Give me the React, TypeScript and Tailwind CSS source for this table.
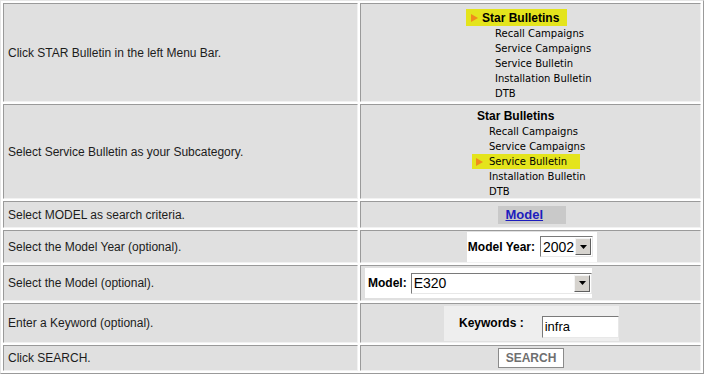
import type { ReactNode } from "react";

const SUB_ITEMS = [
  "Recall Campaigns",
  "Service Campaigns",
  "Service Bulletin",
  "Installation Bulletin",
  "DTB",
];

function Arrow() {
  return (
    <svg width="7" height="8" viewBox="0 0 7 8" className="shrink-0">
      <polygon points="0,0 7,4 0,8" fill="#f08c1c" />
    </svg>
  );
}

function Cell({ children, className = "" }: { children: ReactNode; className?: string }) {
  return (
    <div
      className={`box-border border border-t-[#9a9a9a] border-l-[#9a9a9a] border-b-[#f2f2f2] border-r-[#f2f2f2] bg-[#e0e0e0] ${className}`}
    >
      {children}
    </div>
  );
}

function Step({ text, h }: { text: string; h: string }) {
  return (
    <Cell className={`${h} flex items-center pl-[4px] text-[12px] text-[#1c1c1c]`}>
      {text}
    </Cell>
  );
}

const itemText = "text-[10px] text-black [font-family:'DejaVu_Sans',sans-serif]";

// side bar menu with the heading marked
function MenuHeadingActive() {
  return (
    <div className="ml-[105px] mt-[5px] flex flex-col">
      <div className="flex h-[17px] w-[101px] items-center gap-[4px] bg-[#e4e41c] pl-[5px] text-[12px] font-bold text-black">
        <Arrow />
        <span>Star Bulletins</span>
      </div>
      {SUB_ITEMS.map((item) => (
        <div key={item} className={`flex h-[15px] items-center pl-[29px] ${itemText}`}>
          {item}
        </div>
      ))}
    </div>
  );
}

// side bar menu with a subcategory marked
function MenuItemActive({ active }: { active: string }) {
  return (
    <div className="ml-[111px] mt-[2px] flex flex-col">
      <div className="flex h-[17px] items-center pl-[5px] text-[12px] font-bold text-black">
        Star Bulletins
      </div>
      {SUB_ITEMS.map((item) =>
        item === active ? (
          <div
            key={item}
            className={`flex h-[15px] w-[108px] items-center gap-[6px] bg-[#e4e41c] pl-[4px] ${itemText}`}
          >
            <Arrow />
            <span>{item}</span>
          </div>
        ) : (
          <div key={item} className={`flex h-[15px] items-center pl-[17px] ${itemText}`}>
            {item}
          </div>
        ),
      )}
    </div>
  );
}

function SelectBox({ value, w }: { value: string; w: string }) {
  return (
    <div
      className={`${w} box-border flex h-[21px] items-center border border-t-[#7a7a7a] border-l-[#7a7a7a] border-b-[#e8e8e8] border-r-[#e8e8e8] bg-white`}
    >
      <span className="flex-1 pl-[2px] text-[14px] leading-none text-black">{value}</span>
      <div className="mr-[1px] box-border flex h-[17px] w-[16px] items-center justify-center border border-t-[#f4f4f4] border-l-[#f4f4f4] border-b-[#606060] border-r-[#606060] bg-[#d6d3ce]">
        <svg width="7" height="4" viewBox="0 0 7 4">
          <polygon points="0,0 7,0 3.5,4" fill="#000" />
        </svg>
      </div>
    </div>
  );
}

export default function App() {
  return (
    <div className="h-[375px] w-[704px] bg-white [font-family:'Liberation_Sans',Arial,sans-serif]">
      <div className="box-border w-[704px] border border-t-[#e6e6e6] border-l-[#e6e6e6] border-b-[#9a9a9a] border-r-[#9a9a9a] bg-white p-[2px]">
        <div className="grid grid-cols-[355px_341px] gap-[2px]">
          <Step text="Click STAR Bulletin in the left Menu Bar." h="h-[99px]" />
          <Cell className="flex h-[99px] items-start">
            <MenuHeadingActive />
          </Cell>

          <Step text="Select Service Bulletin as your Subcategory." h="h-[95px]" />
          <Cell className="flex h-[95px] items-start">
            <MenuItemActive active="Service Bulletin" />
          </Cell>

          <Step text="Select MODEL as search criteria." h="h-[27px]" />
          <Cell className="flex h-[27px] items-center justify-center">
            <div className="ml-[2px] flex h-[18px] w-[68px] items-center bg-[#c9c9c9] pl-[8px]">
              <a href="#" className="text-[13px] font-bold text-[#1d1dbd] underline">
                Model
              </a>
            </div>
          </Cell>

          <Step text="Select the Model Year (optional)." h="h-[33px]" />
          <Cell className="flex h-[33px] items-center justify-center">
            <div className="ml-[3px] flex h-[30px] w-[130px] items-center justify-end gap-[5px] bg-white pr-[4px]">
              <span className="text-[12px] font-bold text-black">Model Year:</span>
              <SelectBox value="2002" w="w-[53px]" />
            </div>
          </Cell>

          <Step text="Select the Model (optional)." h="h-[36px]" />
          <Cell className="flex h-[36px] items-center">
            <div className="ml-[4px] flex h-[30px] w-[227px] items-center gap-[4px] bg-white pl-[3px]">
              <span className="text-[12px] font-bold text-black">Model:</span>
              <SelectBox value="E320" w="w-[182px]" />
            </div>
          </Cell>

          <Step text="Enter a Keyword (optional)." h="h-[40px]" />
          <Cell className="flex h-[40px] items-center">
            <div className="ml-[83px] flex h-[35px] w-[175px] items-center bg-[#eeeeee] pl-[15px]">
              <span className="whitespace-nowrap text-[12px] font-bold text-black">Keywords :</span>
              <div className="ml-[18px] mt-[8px] box-border flex h-[22px] w-[78px] items-center border border-t-[#7a7a7a] border-l-[#7a7a7a] border-b-[#e8e8e8] border-r-[#e8e8e8] bg-white pl-[2px] text-[13px] text-black">
                infra
              </div>
            </div>
          </Cell>

          <Step text="Click SEARCH." h="h-[26px]" />
          <Cell className="flex h-[26px] items-center justify-center">
            <button className="ml-[1px] box-border flex h-[20px] w-[66px] items-center justify-center border border-[#8a8a8a] bg-white text-[12px] font-bold text-[#6f6f6f]">
              SEARCH
            </button>
          </Cell>
        </div>
      </div>
    </div>
  );
}
